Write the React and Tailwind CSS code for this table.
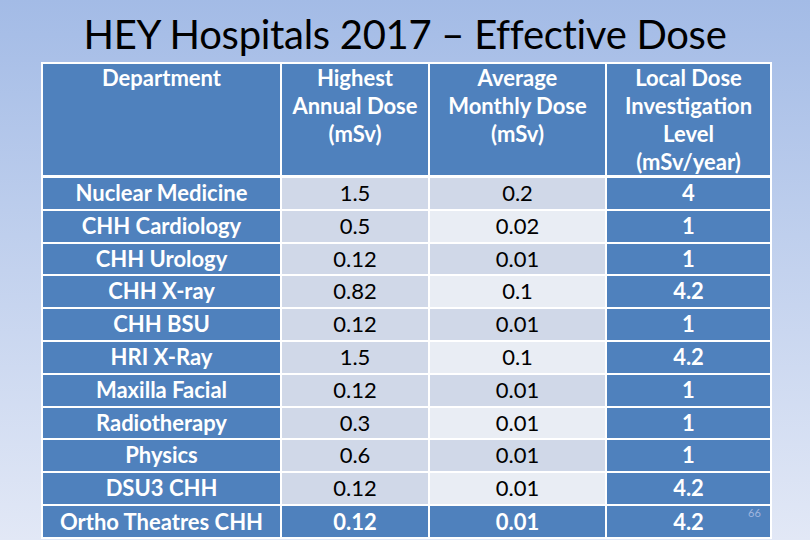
import React from 'react';

const rows = [
  ['Nuclear Medicine', '1.5', '0.2', '4'],
  ['CHH Cardiology', '0.5', '0.02', '1'],
  ['CHH Urology', '0.12', '0.01', '1'],
  ['CHH X-ray', '0.82', '0.1', '4.2'],
  ['CHH BSU', '0.12', '0.01', '1'],
  ['HRI X-Ray', '1.5', '0.1', '4.2'],
  ['Maxilla Facial', '0.12', '0.01', '1'],
  ['Radiotherapy', '0.3', '0.01', '1'],
  ['Physics', '0.6', '0.01', '1'],
  ['DSU3 CHH', '0.12', '0.01', '4.2'],
];

const last = ['Ortho Theatres CHH', '0.12', '0.01', '4.2'];

export default function App() {
  return (
    <div
      className="relative w-[810px] h-[540px] overflow-hidden bg-gradient-to-b from-[#a3bbe6] via-[#c3d2ee] to-[#e2e8f6] flex flex-col"
      style={{ fontFamily: 'Lato, "Open Sans", sans-serif' }}
    >
      <h1 className="h-[62px] pt-[10px] text-center text-[40px] leading-[48px] text-black tracking-[-0.3px]">
        HEY Hospitals 2017 – Effective Dose
      </h1>

      <div className="ml-[41px] w-fit grid grid-cols-[237px_146px_175px_163px] gap-[2px] bg-white p-[2px] text-[22px] leading-[30px]">
        {/* header */}
        <div className="bg-[#4f81bd] text-white font-bold text-center h-[111px] mb-[1px] leading-[28px]">Department</div>
        <div className="bg-[#4f81bd] text-white font-bold text-center h-[111px] mb-[1px] leading-[28px]">
          Highest<br />Annual Dose<br />(mSv)
        </div>
        <div className="bg-[#4f81bd] text-white font-bold text-center h-[111px] mb-[1px] leading-[28px]">
          Average<br />Monthly Dose<br />(mSv)
        </div>
        <div className="bg-[#4f81bd] text-white font-bold text-center h-[111px] mb-[1px] leading-[28px]">
          Local Dose<br />Investigation<br />Level<br />(mSv/year)
        </div>

        {rows.map((r, i) => {
          const light = i % 2 === 1;
          return (
            <React.Fragment key={r[0]}>
              <div className="bg-[#4f81bd] text-white font-bold text-center h-[30.8px]">{r[0]}</div>
              <div className="bg-[#d0d8e8] text-black text-center">{r[1]}</div>
              <div className={`${light ? 'bg-[#e9edf4]' : 'bg-[#d0d8e8]'} text-black text-center`}>{r[2]}</div>
              <div className="bg-[#4f81bd] text-white font-bold text-center">{r[3]}</div>
            </React.Fragment>
          );
        })}

        {last.map((c, i) => (
          <div key={i} className="bg-[#4f81bd] text-white font-bold text-center h-[31px] leading-[31px]">
            {c}
          </div>
        ))}
      </div>

      <span className="absolute left-[748px] top-[505px] text-[11px] text-[#9fb5dd]">66</span>
    </div>
  );
}
